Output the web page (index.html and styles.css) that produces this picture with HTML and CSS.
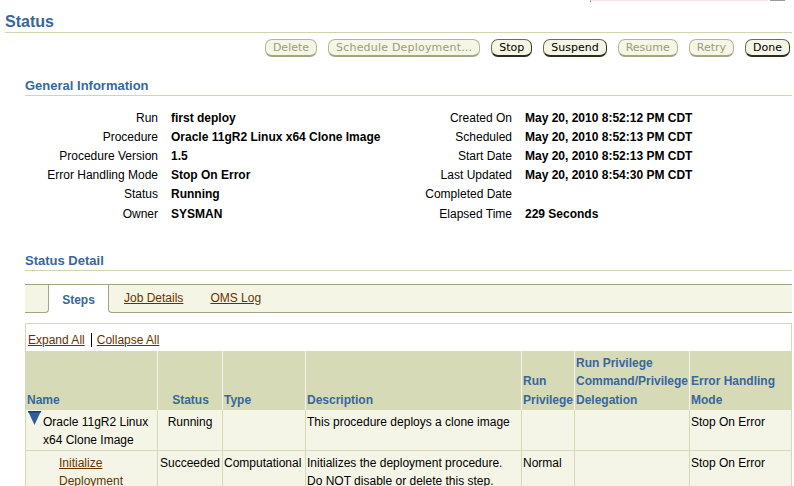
FILE: index.html
```html
<!DOCTYPE html>
<html>
<head>
<meta charset="utf-8">
<link rel="stylesheet" href="styles.css">
</head>
<body>
<div class="topstrip"><span class="field"></span><span class="fieldbtn"></span></div>
<div class="page">
  <h1 class="title">Status</h1>
  <div class="actions">
    <button class="btn off">Delete</button>
    <button class="btn off wide">Schedule Deployment...</button>
    <button class="btn">Stop</button>
    <button class="btn">Suspend</button>
    <button class="btn off">Resume</button>
    <button class="btn off">Retry</button>
    <button class="btn">Done</button>
  </div>
  <div class="section">
    <h2 class="sechead">General Information</h2>
    <div class="info">
      <div class="lbl">Run</div><div class="val">first deploy</div>
      <div class="lbl">Created On</div><div class="val">May 20, 2010 8:52:12 PM CDT</div>
      <div class="lbl">Procedure</div><div class="val">Oracle 11gR2 Linux x64 Clone Image</div>
      <div class="lbl">Scheduled</div><div class="val">May 20, 2010 8:52:13 PM CDT</div>
      <div class="lbl">Procedure Version</div><div class="val">1.5</div>
      <div class="lbl">Start Date</div><div class="val">May 20, 2010 8:52:13 PM CDT</div>
      <div class="lbl">Error Handling Mode</div><div class="val">Stop On Error</div>
      <div class="lbl">Last Updated</div><div class="val">May 20, 2010 8:54:30 PM CDT</div>
      <div class="lbl">Status</div><div class="val">Running</div>
      <div class="lbl">Completed Date</div><div class="val"></div>
      <div class="lbl">Owner</div><div class="val">SYSMAN</div>
      <div class="lbl">Elapsed Time</div><div class="val">229 Seconds</div>
    </div>

    <h2 class="sechead sd">Status Detail</h2>
    <div class="tabs">
      <div class="tabstub"></div>
      <div class="tab">Steps</div>
      <div class="tabrest"><a class="link" href="#">Job Details</a><a class="link" href="#">OMS Log</a></div>
    </div>

    <div class="panel">
      <div class="expand"><a class="link" href="#">Expand All</a><span class="sep"></span><a class="link" href="#">Collapse All</a></div>
      <table class="steps">
        <thead>
          <tr>
            <th class="c-name">Name</th>
            <th class="c-status center">Status</th>
            <th class="c-type">Type</th>
            <th class="c-desc">Description</th>
            <th class="c-rp">Run Privilege</th>
            <th class="c-cmd">Run Privilege Command/Privilege Delegation</th>
            <th class="c-err last">Error Handling Mode</th>
          </tr>
        </thead>
        <tbody>
          <tr>
            <td class="namecell"><div class="nameflex"><svg class="tri" width="13" height="14" viewBox="0 0 13 14"><polygon points="0,0 13,0 6.5,14" fill="#2f5e9b"/><rect x="0" y="0" width="13" height="1.5" fill="#1c3f73"/></svg><span>Oracle 11gR2 Linux x64 Clone Image</span></div></td>
            <td class="center">Running</td>
            <td></td>
            <td>This procedure deploys a clone image</td>
            <td></td>
            <td></td>
            <td class="last">Stop On Error</td>
          </tr>
          <tr>
            <td class="namecell"><div class="indent"><a class="link" href="#">Initialize Deployment</a></div></td>
            <td class="center">Succeeded</td>
            <td>Computational</td>
            <td>Initializes the deployment procedure. Do NOT disable or delete this step.</td>
            <td>Normal</td>
            <td></td>
            <td class="last">Stop On Error</td>
          </tr>
        </tbody>
      </table>
    </div>
  </div>
</div>
</body>
</html>
```
FILE: styles.css
```css
html, body {
  margin: 0;
  padding: 0;
}
body {
  font-family: "Liberation Sans", Arial, sans-serif;
  font-size: 12px;
  color: #000;
  background: #fff;
  overflow: hidden;
}

.topstrip {
  height: 3px;
  display: flex;
  align-items: flex-start;
  padding-left: 590px;
}
.field {
  width: 178px;
  height: 2px;
  box-sizing: border-box;
  border-left: 1px solid #777;
  border-top: 1px solid #f9e6ec;
}
.fieldbtn {
  width: 15px;
  height: 1px;
  background: #9a9a9a;
  margin-left: 2px;
}

.page {
  padding: 0 2px 0 5px;
}

.title {
  margin: 0;
  padding-top: 9px;
  font-size: 16px;
  line-height: 20px;
  font-weight: bold;
  color: #37679c;
  border-bottom: 1px solid #d2d5ad;
}

.actions {
  display: flex;
  justify-content: flex-end;
  gap: 11px;
  margin-top: 6px;
  padding-right: 2px;
}
.btn {
  font-family: "DejaVu Sans", sans-serif;
  font-size: 11px;
  line-height: 15px;
  padding: 0 7px;
  margin: 0;
  background: #f6f6e6;
  color: #000;
  border: 1px solid #6d6f52;
  border-right-color: #34351f;
  border-bottom: 2px solid #2c2d1c;
  border-radius: 7px;
}
.btn.wide {
  letter-spacing: 0.2px;
}
.btn.off {
  color: #9a9d78;
  border-color: #b4b792;
  border-bottom-color: #a3a680;
}

.section {
  padding-left: 20px;
}
.sechead {
  margin: 20px 0 0;
  font-size: 13px;
  line-height: 17px;
  font-weight: bold;
  color: #37679c;
  padding-bottom: 1px;
  border-bottom: 1px solid #d2d5ad;
}
.sechead.sd {
  margin-top: 28px;
}

.info {
  display: grid;
  grid-template-columns: 146px 208px 146px 1fr;
  margin-top: 12.5px;
  line-height: 19.2px;
}
.lbl {
  text-align: right;
  padding-right: 13px;
  white-space: nowrap;
}
.val {
  font-weight: bold;
  white-space: nowrap;
}

.tabs {
  display: flex;
  margin-top: 13px;
  border-top: 1px solid #a3a684;
  height: 28px;
}
.tabstub {
  width: 23px;
  background: #f5f5e6;
  border-bottom: 1px solid #a3a684;
  border-right: 1px solid #a3a684;
  border-bottom-right-radius: 4px;
}
.tab {
  width: 59px;
  text-align: center;
  padding-top: 3px;
  line-height: 24px;
  font-weight: bold;
  color: #37679c;
  background: #fff;
}
.tabrest {
  flex: 1;
  display: flex;
  gap: 27px;
  padding-left: 15px;
  line-height: 27px;
  background: #f5f5e6;
  border-bottom: 1px solid #a3a684;
  border-left: 1px solid #a3a684;
  border-bottom-left-radius: 4px;
}

.link {
  color: #663300;
  text-decoration: underline;
}

.panel {
  margin-top: 10px;
  border: 1px solid #d6d9b5;
  border-bottom: none;
}
.expand {
  display: flex;
  align-items: center;
  padding: 7px 2px 1px;
  line-height: 19px;
}
.sep {
  width: 1px;
  height: 14px;
  background: #000;
  margin: 0 5px 0 6px;
}

.steps {
  width: 100%;
  border-collapse: separate;
  border-spacing: 0;
  table-layout: fixed;
}
.steps th {
  box-sizing: border-box;
  background: #d7dab7;
  color: #37679c;
  font-weight: bold;
  text-align: left;
  vertical-align: bottom;
  padding: 3px 0 0 1px;
  line-height: 18.7px;
  border-right: 1px solid #f4f4e8;
}
.steps td {
  box-sizing: border-box;
  background: #f5f5e7;
  vertical-align: top;
  padding: 3px 1px 0;
  line-height: 18.5px;
  border-right: 1px solid #d6d9b5;
  border-bottom: 1px solid #d6d9b5;
}
.steps .last {
  border-right: none;
}
.steps .center {
  text-align: center;
}
.c-name { width: 132px; }
.c-status { width: 65px; }
.c-type { width: 83px; }
.c-desc { width: 216px; }
.c-rp { width: 53px; }
.c-cmd { width: 115px; }
.c-err { width: 101px; }

.steps td.namecell {
  padding-left: 2px;
  padding-right: 0;
}
.nameflex {
  display: flex;
  gap: 2px;
}
.tri {
  flex: none;
  margin-top: -2px;
}
.indent {
  padding-left: 31px;
}
```
